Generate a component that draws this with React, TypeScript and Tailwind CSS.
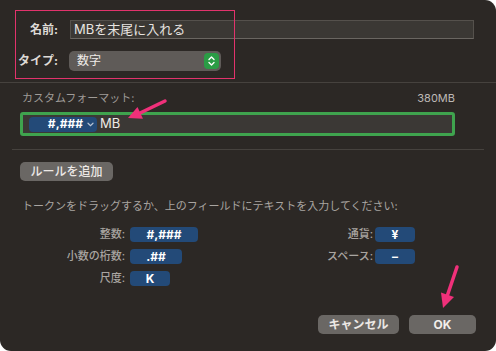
import React from 'react'

const Token = ({ text, w }: { text: string; w: string }) => (
  <div className={`${w} h-[15px] rounded-[4px] bg-[#234a78] flex items-center justify-center text-[12px] font-bold leading-none text-white`}>
    {text}
  </div>
)

const Label = ({ text, w }: { text: string; w: string }) => (
  <div className={`${w} text-right text-[11px] font-medium leading-[15px] text-[#a9a5a1]`}>{text}</div>
)

const App = () => {
  return (
    <div className="relative w-[496px] h-[351px] bg-white overflow-hidden font-['Inter','Noto_Sans_CJK_JP',sans-serif]">
      <div className="flex h-full flex-col rounded-[11px] rounded-tl-none bg-[#2c2825]">
        {/* name + type */}
        <div className="flex flex-col gap-[12px] border-b border-[#46423e] pt-[20px] pb-[11px]">
          <div className="flex items-center">
            <div className="w-[58px] text-right text-[12px] font-bold text-[#dedad6]">名前:</div>
            <div className="ml-[12px] flex h-[19px] w-[404px] items-center border border-[#55514c] border-b-[#6a6661] bg-[#3b3834] pl-[3px] text-[13px] text-[#e8e4e0]">
              MBを末尾に入れる
            </div>
          </div>
          <div className="flex items-center">
            <div className="w-[58px] text-right text-[12px] font-bold text-[#dedad6]">タイプ:</div>
            <div className="ml-[11px] flex h-[20px] w-[152px] items-center justify-between rounded-[5px] bg-[#5f5b58] pl-[8px] pr-[2px]">
              <span className="text-[12px] text-[#f0ece8]">数字</span>
              <div className="flex h-[16px] w-[15px] items-center justify-center rounded-[4px] bg-[#2a9c45]">
                <svg width="9" height="12" viewBox="0 0 9 12" fill="none" stroke="white" strokeWidth="1.4" strokeLinecap="round" strokeLinejoin="round">
                  <path d="M2 4.5 L4.5 2 L7 4.5" />
                  <path d="M2 7.5 L4.5 10 L7 7.5" />
                </svg>
              </div>
            </div>
          </div>
        </div>

        {/* custom format */}
        <div className="px-[20px] pt-[8px]">
          <div className="flex w-[435px] justify-between pl-[2px] text-[11px] leading-[14px]">
            <span className="text-[#9f9b97]">カスタムフォーマット:</span>
            <span className="text-[#bdb9b5]">380MB</span>
          </div>
          <div className="mt-[7px] flex h-[24px] w-[435px] items-center rounded-[3px] border-[3px] border-[#3fa34e] bg-[#3b3835] pl-[6px]">
            <div className="flex h-[15px] w-[68px] items-center justify-end rounded-[4px] bg-[#234a78] pr-[3px]">
              <span className="text-[12px] font-bold leading-none text-white">#,###</span>
              <svg className="ml-[4px]" width="7" height="5" viewBox="0 0 7 5" fill="none" stroke="#b8c4d4" strokeWidth="1.2" strokeLinecap="round">
                <path d="M1 1.2 L3.5 3.6 L6 1.2" />
              </svg>
            </div>
            <span className="ml-[3px] text-[13px] text-[#eeeae6]">MB</span>
          </div>
        </div>
        <div className="mx-[12px] mt-[13px] h-px bg-[#46423e]" />

        {/* rules + tokens */}
        <div className="px-[20px]">
          <button className="mt-[12px] flex h-[19px] w-[93px] items-center justify-center rounded-[5px] bg-[#6a6764] text-[12px] font-medium text-[#ece8e4]">
            ルールを追加
          </button>
          <div className="mt-[18px] pl-[2px] text-[11px] leading-[14px] text-[#a9a5a1]">
            トークンをドラッグするか、上のフィールドにテキストを入力してください:
          </div>
          <div className="mt-[14px] flex">
            <div className="flex w-[178px] flex-col gap-[7px]">
              <div className="flex items-center">
                <Label text="整数:" w="w-[105px]" />
                <div className="ml-[5px]"><Token text="#,###" w="w-[68px]" /></div>
              </div>
              <div className="flex items-center">
                <Label text="小数の桁数:" w="w-[105px]" />
                <div className="ml-[5px]"><Token text=".##" w="w-[52px]" /></div>
              </div>
              <div className="flex items-center">
                <Label text="尺度:" w="w-[105px]" />
                <div className="ml-[5px]"><Token text="K" w="w-[40px]" /></div>
              </div>
            </div>
            <div className="flex flex-col gap-[7px]">
              <div className="flex items-center">
                <Label text="通貨:" w="w-[175px]" />
                <div className="ml-[2px]"><Token text="¥" w="w-[40px]" /></div>
              </div>
              <div className="flex items-center">
                <Label text="スペース:" w="w-[175px]" />
                <div className="ml-[2px]"><Token text="–" w="w-[40px]" /></div>
              </div>
            </div>
          </div>
        </div>

        {/* buttons */}
        <div className="mt-auto flex justify-end gap-[10px] pr-[20px] pb-[17px]">
          <button className="flex h-[19px] w-[81px] items-center justify-center rounded-[5px] bg-[#6a6764] text-[12px] font-bold text-[#ece8e4]">
            キャンセル
          </button>
          <button className="flex h-[19px] w-[67px] items-center justify-center rounded-[5px] bg-[#6a6764] text-[12px] font-bold text-[#f2eeea]">
            OK
          </button>
        </div>
      </div>

      {/* annotations */}
      <div className="absolute left-[15px] top-[10px] h-[69px] w-[220px] border-[1.5px] border-[#e2336c]" />
      <svg className="pointer-events-none absolute inset-0" width="496" height="351" viewBox="0 0 496 351">
        <line x1="165" y1="101" x2="139" y2="113.5" stroke="#f0307a" strokeWidth="3.5" strokeLinecap="round" />
        <polygon points="128,118 143,118.8 137.5,107" fill="#f0307a" />
        <line x1="457" y1="267" x2="447.5" y2="295" stroke="#f0307a" strokeWidth="3.5" strokeLinecap="round" />
        <polygon points="443,308 454,297 441,292.5" fill="#f0307a" />
      </svg>
    </div>
  )
}

export default App
